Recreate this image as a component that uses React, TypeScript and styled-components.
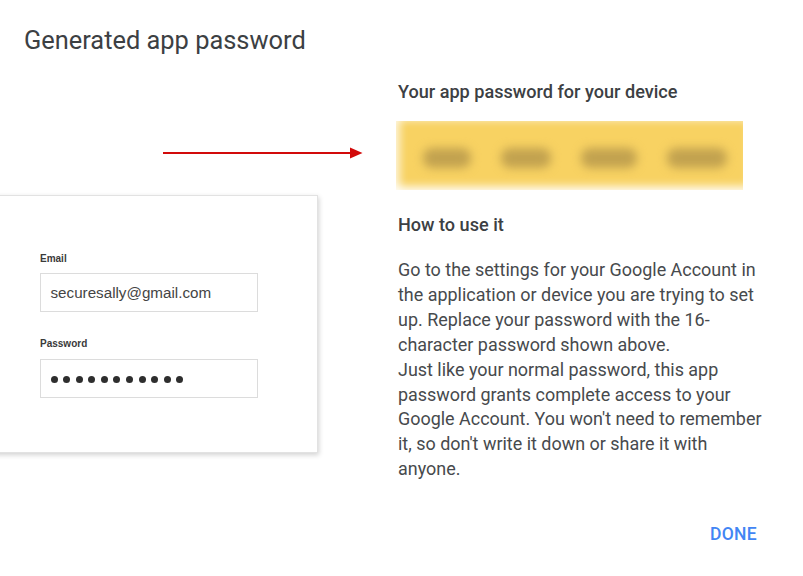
import React from "react";
import styled, { createGlobalStyle } from "styled-components";

const Global = createGlobalStyle`
  html, body { margin: 0; padding: 0; background: #fff; }
  body { font-family: Roboto, "Noto Sans", Arial, sans-serif; }
`;

const Dialog = styled.div`
  width: 803px;
  height: 576px;
  overflow: hidden;
  display: flex;
  flex-direction: column;
  background: #fff;
`;

const Title = styled.h1`
  margin: 0;
  padding: 26px 24px 0;
  font-size: 25.4px;
  line-height: 28px;
  font-weight: 400;
  color: #3c4043;
`;

const Body = styled.div`
  display: flex;
  flex: 1;
`;

const LeftCol = styled.div`
  width: 398px;
  flex: none;
  display: flex;
  flex-direction: column;
`;

const ArrowWrap = styled.div`
  margin: 93px 0 0 163px;
  height: 12px;
  line-height: 0;
`;

const Card = styled.div`
  margin: 36px 0 0 -20px;
  width: 338px;
  height: 258px;
  box-sizing: border-box;
  background: #fff;
  border: 1px solid #e2e2e2;
  box-shadow: 1px 2px 5px rgba(0, 0, 0, 0.18);
  padding: 57px 0 0 59px;
  font-family: "Liberation Sans", Arial, sans-serif;
`;

const FieldLabel = styled.div<{ $gap: number }>`
  margin-top: ${(p) => p.$gap}px;
  font-size: 10px;
  line-height: 12px;
  font-weight: 700;
  color: #3a3a3a;
`;

const FieldBox = styled.div<{ $gap: number }>`
  margin-top: ${(p) => p.$gap}px;
  width: 218px;
  height: 39px;
  box-sizing: border-box;
  border: 1.5px solid #dcdcdc;
  display: flex;
  align-items: center;
  padding-left: 9.5px;
  font-size: 15.2px;
  color: #444;
`;

const Dots = styled.div`
  display: flex;
  gap: 5.6px;
  margin-top: 2px;
`;

const Dot = styled.span`
  width: 7px;
  height: 7px;
  border-radius: 50%;
  background: #2e2e2e;
`;

const RightCol = styled.div`
  flex: 1;
  display: flex;
  flex-direction: column;
`;

const Heading = styled.h2<{ $gap: number }>`
  margin: ${(p) => p.$gap}px 0 0;
  font-size: 18.1px;
  line-height: 24px;
  font-weight: 500;
  color: #3c4043;
`;

const PasswordBox = styled.div`
  margin: 17px 0 0 -2px;
  width: 347px;
  height: 69px;
  background: #f8d262;
  position: relative;
  overflow: hidden;
  box-shadow: inset 8px 0 8px -4px rgba(255, 255, 255, 0.75),
    inset 0 -10px 8px -6px rgba(255, 255, 255, 0.85),
    inset 0 8px 6px -6px rgba(255, 255, 255, 0.3);
`;

const BlobRow = styled.div`
  display: flex;
  align-items: center;
  height: 100%;
  padding-left: 27px;
  gap: 30px;
  filter: blur(5px);
`;

const Blob = styled.div<{ $w: number }>`
  width: ${(p) => p.$w}px;
  height: 20px;
  border-radius: 9px;
  background: #c2a24f;
  margin-top: 4px;
`;

const Paragraph = styled.p`
  margin: 21px 0 0;
  width: 370px;
  font-size: 17.95px;
  line-height: 24.9px;
  color: #474a4d;
  font-weight: 400;
`;

const Footer = styled.div`
  display: flex;
  justify-content: flex-end;
  padding: 0 38px 0 0;
  margin-bottom: 24px;
`;

const DoneButton = styled.button`
  border: none;
  background: transparent;
  font-family: Roboto, Arial, sans-serif;
  font-size: 17.5px;
  font-weight: 500;
  letter-spacing: 0.3px;
  color: #4285f4;
  padding: 8px;
  line-height: 20px;
  cursor: pointer;
`;

const Arrow = () => (
  <svg width="200" height="12" viewBox="0 0 200 12">
    <line x1="0" y1="6" x2="188" y2="6" stroke="#d20a0a" strokeWidth="2" />
    <polygon points="187,0.5 199.5,6 187,11.5" fill="#d20a0a" />
  </svg>
);

export default function App() {
  return (
    <>
      <Global />
      <Dialog>
        <Title>Generated app password</Title>
        <Body>
          <LeftCol>
            <ArrowWrap>
              <Arrow />
            </ArrowWrap>
            <Card>
              <FieldLabel $gap={0}>Email</FieldLabel>
              <FieldBox $gap={8}>securesally@gmail.com</FieldBox>
              <FieldLabel $gap={26}>Password</FieldLabel>
              <FieldBox $gap={9}>
                <Dots>
                  {Array.from({ length: 11 }).map((_, i) => (
                    <Dot key={i} />
                  ))}
                </Dots>
              </FieldBox>
            </Card>
          </LeftCol>
          <RightCol>
            <Heading $gap={26}>Your app password for your device</Heading>
            <PasswordBox>
              <BlobRow>
                <Blob $w={48} />
                <Blob $w={50} />
                <Blob $w={56} />
                <Blob $w={60} />
              </BlobRow>
            </PasswordBox>
            <Heading $gap={23}>How to use it</Heading>
            <Paragraph>
              Go to the settings for your Google Account in the application or
              device you are trying to set up. Replace your password with the
              16-character password shown above.
              <br />
              Just like your normal password, this app password grants complete
              access to your Google Account. You won't need to remember it, so
              don't write it down or share it with anyone.
            </Paragraph>
          </RightCol>
        </Body>
        <Footer>
          <DoneButton>DONE</DoneButton>
        </Footer>
      </Dialog>
    </>
  );
}
